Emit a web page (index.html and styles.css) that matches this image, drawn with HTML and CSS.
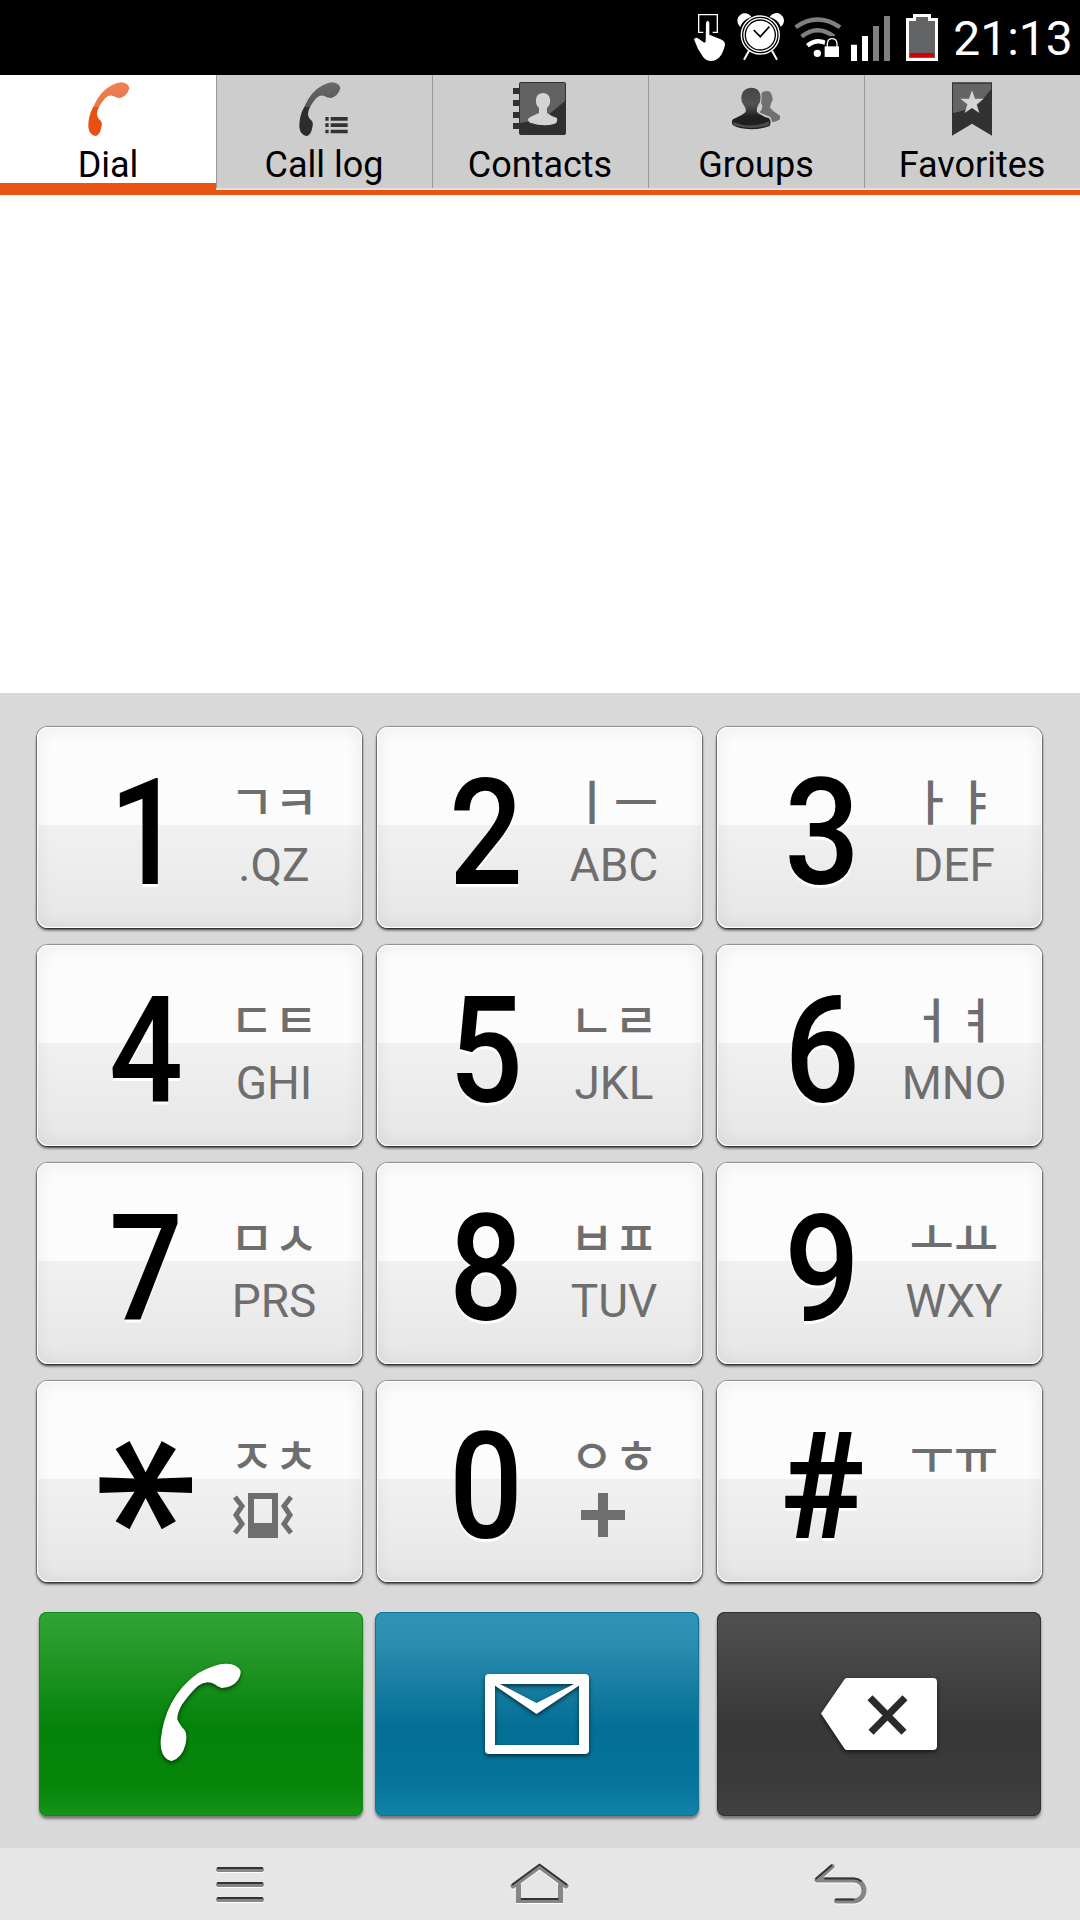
FILE: index.html
```html
<!DOCTYPE html>
<html lang="en">
<head>
  <meta charset="UTF-8">
  <meta name="viewport" content="width=device-width, initial-scale=1.0">
  <title>Dial</title>
  <link rel="stylesheet" href="styles.css">
</head>
<body>
  <header class="status-bar">
    <svg width="40" height="75" viewBox="30 0 120 225">
      <path d="M70 97H56V44H112V97H98" fill="none" stroke="#fff" stroke-width="4"/>
      <path d="M78 68Q83 56 88 68V104L120 117Q135 122 135 134Q134 142 125 163Q114 182 94 183Q78 183 70 172L54 147L42 118Q46 110 56 116L73 128L77 125Z" fill="#fff"/>
    </svg>
    <svg width="60" height="75" viewBox="150 0 180 225">
      <g fill="none" stroke="#fff">
        <path d="M207 152L192 179M276 152L291 179" stroke-width="6"/>
        <circle cx="241" cy="105" r="57" stroke-width="4"/>
      </g>
      <path d="M178 74A19 19 0 0 1 211 50Q188 58 180 77ZM306 74A19 19 0 0 0 272 50Q296 58 303 77Z" fill="#fff" stroke="#fff" stroke-width="4"/>
      <circle cx="241" cy="105" r="51" fill="#fff"/>
      <circle cx="241" cy="105" r="45" fill="none" stroke="#000" stroke-width="4"/>
      <path d="M221 90L241 110L268 80" fill="none" stroke="#000" stroke-width="5"/>
    </svg>
    <svg width="56" height="75" viewBox="330 0 168 225">
      <g fill="none" stroke-width="13">
        <path d="M347 82Q412 35 480 82" stroke="#808080"/>
        <path d="M365 110Q412 72 462 110" stroke="#808080"/>
        <path d="M382 137Q412 113 442 132" stroke="#fff"/>
      </g>
      <circle cx="412" cy="160" r="11" fill="#fff"/>
      <path d="M429 171V138H434V130Q438 108 456 108Q476 108 479 130V138H484V177H429Z" fill="#000"/>
      <rect x="434" y="139" width="43" height="32" fill="#fff"/>
      <path d="M442 140V130Q444 116 456 116Q469 116 471 130V140" fill="none" stroke="#fff" stroke-width="4"/>
    </svg>
    <svg width="52" height="75" viewBox="498 0 156 225">
      <path d="M513 134H531V183H513ZM546 108H564V183H546Z" fill="#fff"/>
      <path d="M579 78H597V183H579ZM612 48H630V183H612Z" fill="#808080"/>
    </svg>
    <svg width="48" height="75" viewBox="654 0 144 225">
      <path d="M678 54H699V42H753V54H774V183H678Z" fill="#fff"/>
      <path d="M687 63H708V51H744V63H765V174H687Z" fill="#636466"/>
      <path d="M690 159H762V171H690Z" fill="#d20000"/>
    </svg>
    <div class="clock">21:13</div>
  </header>

  <nav class="tabs">
    <a class="tab active">
      <svg width="50" height="54" viewBox="249 36 150 162">
        <defs>
          <linearGradient id="orange" gradientUnits="userSpaceOnUse" x1="275" y1="37" x2="287" y2="198">
            <stop offset="0" stop-color="#ef8156"/>
            <stop offset=".46" stop-color="#ea7446"/>
            <stop offset=".46" stop-color="#e85012"/>
          </linearGradient>
        </defs>
        <path d="M365 37Q386 40 388 55Q382 78 360 84Q348 84 340 78Q328 74 316 84Q292 112 291 130Q290 143 302 152Q308 158 304 172Q300 196 287 198Q268 196 265 172Q264 138 280 110Q300 64 335 46Q352 37 365 37Z" fill="url(#orange)"/>
      </svg>
      <span>Dial</span>
    </a>
    <a class="tab">
      <svg width="50" height="54" viewBox="897 36 150 162">
        <defs>
          <linearGradient id="gray" gradientUnits="userSpaceOnUse" x1="275" y1="37" x2="287" y2="198">
            <stop offset="0" stop-color="#6c6c6c"/>
            <stop offset=".46" stop-color="#555"/>
            <stop offset=".46" stop-color="#2d2d2d"/>
          </linearGradient>
        </defs>
        <path transform="translate(633 0)" d="M365 37Q386 40 388 55Q382 78 360 84Q348 84 340 78Q328 74 316 84Q292 112 291 130Q290 143 302 152Q308 158 304 172Q300 196 287 198Q268 196 265 172Q264 138 280 110Q300 64 335 46Q352 37 365 37Z" fill="url(#gray)"/>
        <path d="M976 141h10v11h-10zM992 141h51v11h-51zM976 160h10v11h-10zM992 160h51v11h-51zM976 179h10v11h-10zM992 179h51v11h-51z" fill="#333"/>
      </svg>
      <span>Call log</span>
    </a>
    <a class="tab">
      <svg width="54" height="54" viewBox="0 0 54 54">
        <path d="M8 0H51Q53 0 53 2V51Q53 53 51 53H8Q6 53 6 51V47H0V41H6V36H0V30H6V24H0V18H6V12H0V6H6V2Q6 0 8 0Z" fill="#303030"/>
        <path d="M8 1H52V19L34 34Q22 39 7 41V2Z" fill="#626262"/>
        <path d="M30 11Q36 11 37 17Q38 22 34 26V31Q38 34 44 36Q45 41 41 42Q30 45 18 41Q15 40 15 37Q16 35 26 31V26Q22 22 23 17Q24 11 30 11Z" fill="#d4d4d4"/>
      </svg>
      <span>Contacts</span>
    </a>
    <a class="tab">
      <svg width="50" height="54" viewBox="152 246 150 162">
        <path d="M243 280Q250 271 266 274Q276 280 277 300Q272 307 269 322Q274 332 299 347V358Q290 366 275 367L270 351L236 337Q246 330 246 318Q238 306 243 280Z" fill="#707070"/>
        <path d="M212 263Q236 263 240 285Q243 303 234 315Q228 325 230 336Q238 345 266 355Q274 363 268 378Q240 388 212 388Q174 386 157 375Q152 365 158 358Q188 344 196 336Q198 325 190 315Q180 302 184 285Q188 265 212 263Z" fill="#cdcdcd" stroke="#cdcdcd" stroke-width="7"/>
        <path d="M212 263Q236 263 240 285Q243 303 234 315Q228 325 230 336Q238 345 266 355Q274 363 268 378Q240 388 212 388Q174 386 157 375Q152 365 158 358Q188 344 196 336Q198 325 190 315Q180 302 184 285Q188 265 212 263Z" fill="url(#person)"/>
        <path d="M159 366Q212 388 266 364V376Q212 392 159 376Z" fill="#4c4c4c"/>
        <defs>
          <linearGradient id="person" x1="0" y1="0" x2="0" y2="1">
            <stop offset="0" stop-color="#454545"/>
            <stop offset=".4" stop-color="#535353"/>
            <stop offset=".7" stop-color="#202020"/>
          </linearGradient>
        </defs>
      </svg>
      <span>Groups</span>
    </a>
    <a class="tab">
      <svg width="50" height="54" viewBox="798 246 150 162">
        <path d="M813 247H933V407L873 371L813 407Z" fill="#323232"/>
        <path d="M816 251H930V268Q905 300 890 315Q850 333 816 339Z" fill="#646464"/>
        <path d="M873 271L882 296H908L887 313L895 339L873 324L851 339L859 313L838 296H864Z" fill="#d4d4d4"/>
      </svg>
      <span>Favorites</span>
    </a>
  </nav>

  <main class="number-display"></main>

  <section class="dialpad">
    <div class="keys">
      <button class="key"><span class="digit">1</span><span class="letters"><span class="jamo">ㄱㅋ</span><span class="latin">.QZ</span></span></button>
      <button class="key"><span class="digit">2</span><span class="letters"><span class="jamo">ㅣㅡ</span><span class="latin">ABC</span></span></button>
      <button class="key"><span class="digit">3</span><span class="letters"><span class="jamo">ㅏㅑ</span><span class="latin">DEF</span></span></button>
      <button class="key"><span class="digit">4</span><span class="letters"><span class="jamo">ㄷㅌ</span><span class="latin">GHI</span></span></button>
      <button class="key"><span class="digit">5</span><span class="letters"><span class="jamo">ㄴㄹ</span><span class="latin">JKL</span></span></button>
      <button class="key"><span class="digit">6</span><span class="letters"><span class="jamo">ㅓㅕ</span><span class="latin">MNO</span></span></button>
      <button class="key"><span class="digit">7</span><span class="letters"><span class="jamo">ㅁㅅ</span><span class="latin">PRS</span></span></button>
      <button class="key"><span class="digit">8</span><span class="letters"><span class="jamo">ㅂㅍ</span><span class="latin">TUV</span></span></button>
      <button class="key"><span class="digit">9</span><span class="letters"><span class="jamo">ㅗㅛ</span><span class="latin">WXY</span></span></button>
      <button class="key"><span class="digit star">*</span><span class="letters"><span class="jamo">ㅈㅊ</span>
        <svg class="key-icon" width="60" height="46" viewBox="0 0 60 46">
          <path d="M15 0H45V45H15ZM21 6V30H39V6Z" fill="#6e6e6e" fill-rule="evenodd"/>
          <path d="M2 4L9 13L3 22L9 31L2 40M58 4L51 13L57 22L51 31L58 40" fill="none" stroke="#6e6e6e" stroke-width="5"/>
        </svg>
      </span></button>
      <button class="key"><span class="digit">0</span><span class="letters"><span class="jamo">ㅇㅎ</span>
        <svg class="key-icon" width="44" height="46" viewBox="0 0 44 46">
          <path d="M17 0H27V17H44V27H27V44H17V27H0V17H17Z" fill="#6e6e6e"/>
        </svg>
      </span></button>
      <button class="key"><span class="digit hash">#</span><span class="letters"><span class="jamo">ㅜㅠ</span></span></button>
    </div>

    <div class="actions">
      <button class="action call">
        <svg width="86" height="103" viewBox="460 180 250 310" preserveAspectRatio="none">
          <path d="M660 191Q690 192 700 212Q702 232 684 250Q668 264 645 264Q632 260 624 252Q600 240 576 258Q556 276 530 314Q516 338 516 358Q520 370 538 392Q546 404 540 434Q530 474 500 484Q488 484 478 470Q466 452 468 420Q474 360 498 312Q528 254 576 220Q626 190 660 191Z" fill="#fff"/>
        </svg>
      </button>
      <button class="action message">
        <svg width="104" height="80" viewBox="0 0 104 80">
          <path d="M4 0H100Q104 0 104 4V76Q104 80 100 80H4Q0 80 0 76V4Q0 0 4 0ZM10 10V71H94V10Z" fill="#fff" fill-rule="evenodd"/>
          <path d="M9 9H13L51.5 29L91 9H95V11L51.5 40L9 11Z" fill="#fff"/>
        </svg>
      </button>
      <button class="action delete">
        <svg width="116" height="72" viewBox="0 0 116 73" preserveAspectRatio="none">
          <path d="M0 36L23 2Q24 0 26 0H112Q116 0 116 4V69Q116 73 112 73H26Q24 73 23 71Z" fill="#fff"/>
          <path d="M49 20L83 55M84 20L50 55" stroke="#2a2a2a" stroke-width="7"/>
        </svg>
      </button>
    </div>
  </section>

  <footer class="nav-bar">
    <svg width="60" height="44" viewBox="0 0 60 44">
      <path d="M8.500 6.500H51.500M8.500 21.500H51.500M8.500 36.500H51.500" class="nav-line"/>
      <path d="M8 5H52M8 20H52M8 35H52" class="nav-edge"/>
    </svg>
    <svg width="62" height="44" viewBox="0 0 62 44">
      <path d="M4 23L30.500 3.500L57 23M9.500 22V37.500H51.500V22" class="nav-line home"/>
      <path d="M3.500 21.500L30.500 1.500L57.500 21.500M12.500 36H49" class="nav-edge"/>
    </svg>
    <svg width="60" height="44" viewBox="0 0 60 44">
      <path d="M22 3.500L7 17H43.500A10.500 10.500 0 0 1 43.500 38H26.500" class="nav-line"/>
      <path d="M21.500 2.500L6 15.500M15 15.500H43.500Q48 15.500 51 18M26 36.500H43.500" class="nav-edge"/>
    </svg>
  </footer>
</body>
</html>
```

FILE: styles.css
```css
body {
  margin: 0;
  height: 1920px;
  display: flex;
  flex-direction: column;
  font-family: Roboto, "Noto Sans CJK KR", sans-serif;
  background-color: #fff;
  color: #000;
}
svg {
  display: block;
  flex: none;
}
button {
  border: none;
  padding: 0;
  margin: 0;
  font-family: inherit;
  cursor: pointer;
}

/* Status bar */
.status-bar {
  height: 75px;
  display: flex;
  justify-content: flex-end;
  background-color: #000;
  color: #fff;
}
.clock {
  width: 134px;
  text-align: center;
  font-size: 48px;
  line-height: 78px;
}

/* Tabs */
.tabs {
  height: 115px;
  display: grid;
  grid-template-columns: repeat(5, 1fr);
  border-bottom: 5px solid #e95314;
}
.tab {
  height: 113px;
  box-sizing: border-box;
  padding-top: 7px;
  display: flex;
  flex-direction: column;
  align-items: center;
  background-color: #cdcdcd;
  box-shadow: inset 1px 0 #999, 0 2px #e0e0e0;
  font-size: 36px;
  line-height: 42px;
}
.tab span {
  margin-top: 8px;
}
.tab.active {
  height: 115px;
  background-color: #fff;
  border-bottom: 7px solid #e95314;
  box-shadow: none;
}

.number-display {
  flex: 1;
}

/* Dialpad */
.dialpad {
  height: 1155px;
  box-sizing: border-box;
  padding-top: 34px;
  background-color: #d9d9d9;
}
.keys {
  display: grid;
  grid-template-columns: repeat(3, 325px);
  grid-auto-rows: 201px;
  gap: 17px 15px;
  padding-left: 37px;
}
.key {
  display: flex;
  align-items: flex-start;
  justify-content: space-between;
  padding: 0 28px 0 57px;
  border-radius: 11px;
  background: linear-gradient(#fcfcfc 49%, #f1f1f1 49%, #e6e6e6);
  box-shadow: inset 0 0 0 1px #fff, inset 0 0 18px rgba(0, 0, 0, 0.08),
    0 0 1px 1px rgba(0, 0, 0, 0.35), 0 2px 3px rgba(0, 0, 0, 0.75);
}
.digit {
  width: 100px;
  text-align: center;
  font-size: 148px;
  font-weight: 500;
  line-height: 214px;
  color: #000;
  text-shadow: 0 3px 1px #fff;
  transform: translateX(2px) scaleX(0.88);
}
.key:nth-child(3n) .digit {
  transform: translateX(-2px) scaleX(0.9);
}
.star {
  width: 140px;
  margin: 0 -20px;
  font-family: Inter, sans-serif;
  font-size: 226px;
  font-weight: 400;
  text-shadow: none;
  transform: translate(-34px, -3px) rotate(90deg);
}
.key:nth-child(3n) .hash {
  font-weight: 700;
  transform: translateX(-1px) scaleX(0.95);
}
.letters {
  width: 120px;
  padding-top: 44px;
  display: flex;
  flex-direction: column;
  align-items: center;
  color: #6e6e6e;
}
.jamo {
  font-family: "Noto Sans CJK KR", sans-serif;
  font-size: 48px;
  font-weight: 500;
  line-height: 56px;
  margin-bottom: 11px;
  white-space: nowrap;
}
.latin {
  font-size: 46px;
  line-height: 54px;
}
.key-icon {
  margin: 1px 22px 0 0;
}

/* Call, message and delete buttons */
.actions {
  display: flex;
  padding: 30px 0 0 39px;
}
.action {
  width: 324px;
  height: 204px;
  display: flex;
  align-items: center;
  justify-content: center;
  border-radius: 8px;
}
.action svg {
  overflow: visible;
  margin-bottom: 1px;
  filter: drop-shadow(0 2px 2px rgba(0, 0, 0, 0.6));
}
.call {
  background: linear-gradient(#30a434, #27992a 18%, #04830a 56%, #068709 85%, #14941a);
  box-shadow: inset 0 0 0 1px #0f8a14, 0 3px 3px rgba(0, 0, 0, 0.45);
}
.call svg {
  margin-bottom: 5px;
}
.message {
  margin-left: 12px;
  background: linear-gradient(#3194b6, #298bae 18%, #046f95 56%, #06759b 85%, #1284aa);
  box-shadow: inset 0 0 0 1px #0d7398, 0 3px 3px rgba(0, 0, 0, 0.45);
}
.delete {
  margin-left: 18px;
  background: linear-gradient(#505050, #383838 56%, #3b3b3b 85%, #424242);
  box-shadow: inset 0 0 0 1px #303030, 0 3px 3px rgba(0, 0, 0, 0.45);
}

/* System navigation */
.nav-bar {
  height: 72px;
  box-sizing: border-box;
  padding: 15px 90px 0;
  display: grid;
  grid-template-columns: repeat(3, 1fr);
  justify-items: center;
  background-color: #e6e6e6;
}
.nav-line {
  fill: none;
  stroke: #868686;
  stroke-width: 5;
  stroke-linecap: round;
  stroke-linejoin: round;
}
.nav-edge {
  fill: none;
  stroke: #333;
  stroke-width: 1.8;
  stroke-linecap: round;
}
.nav-bar svg {
  filter: drop-shadow(0 1px 0 #fff);
}
.home {
  stroke-linejoin: miter;
}
```
